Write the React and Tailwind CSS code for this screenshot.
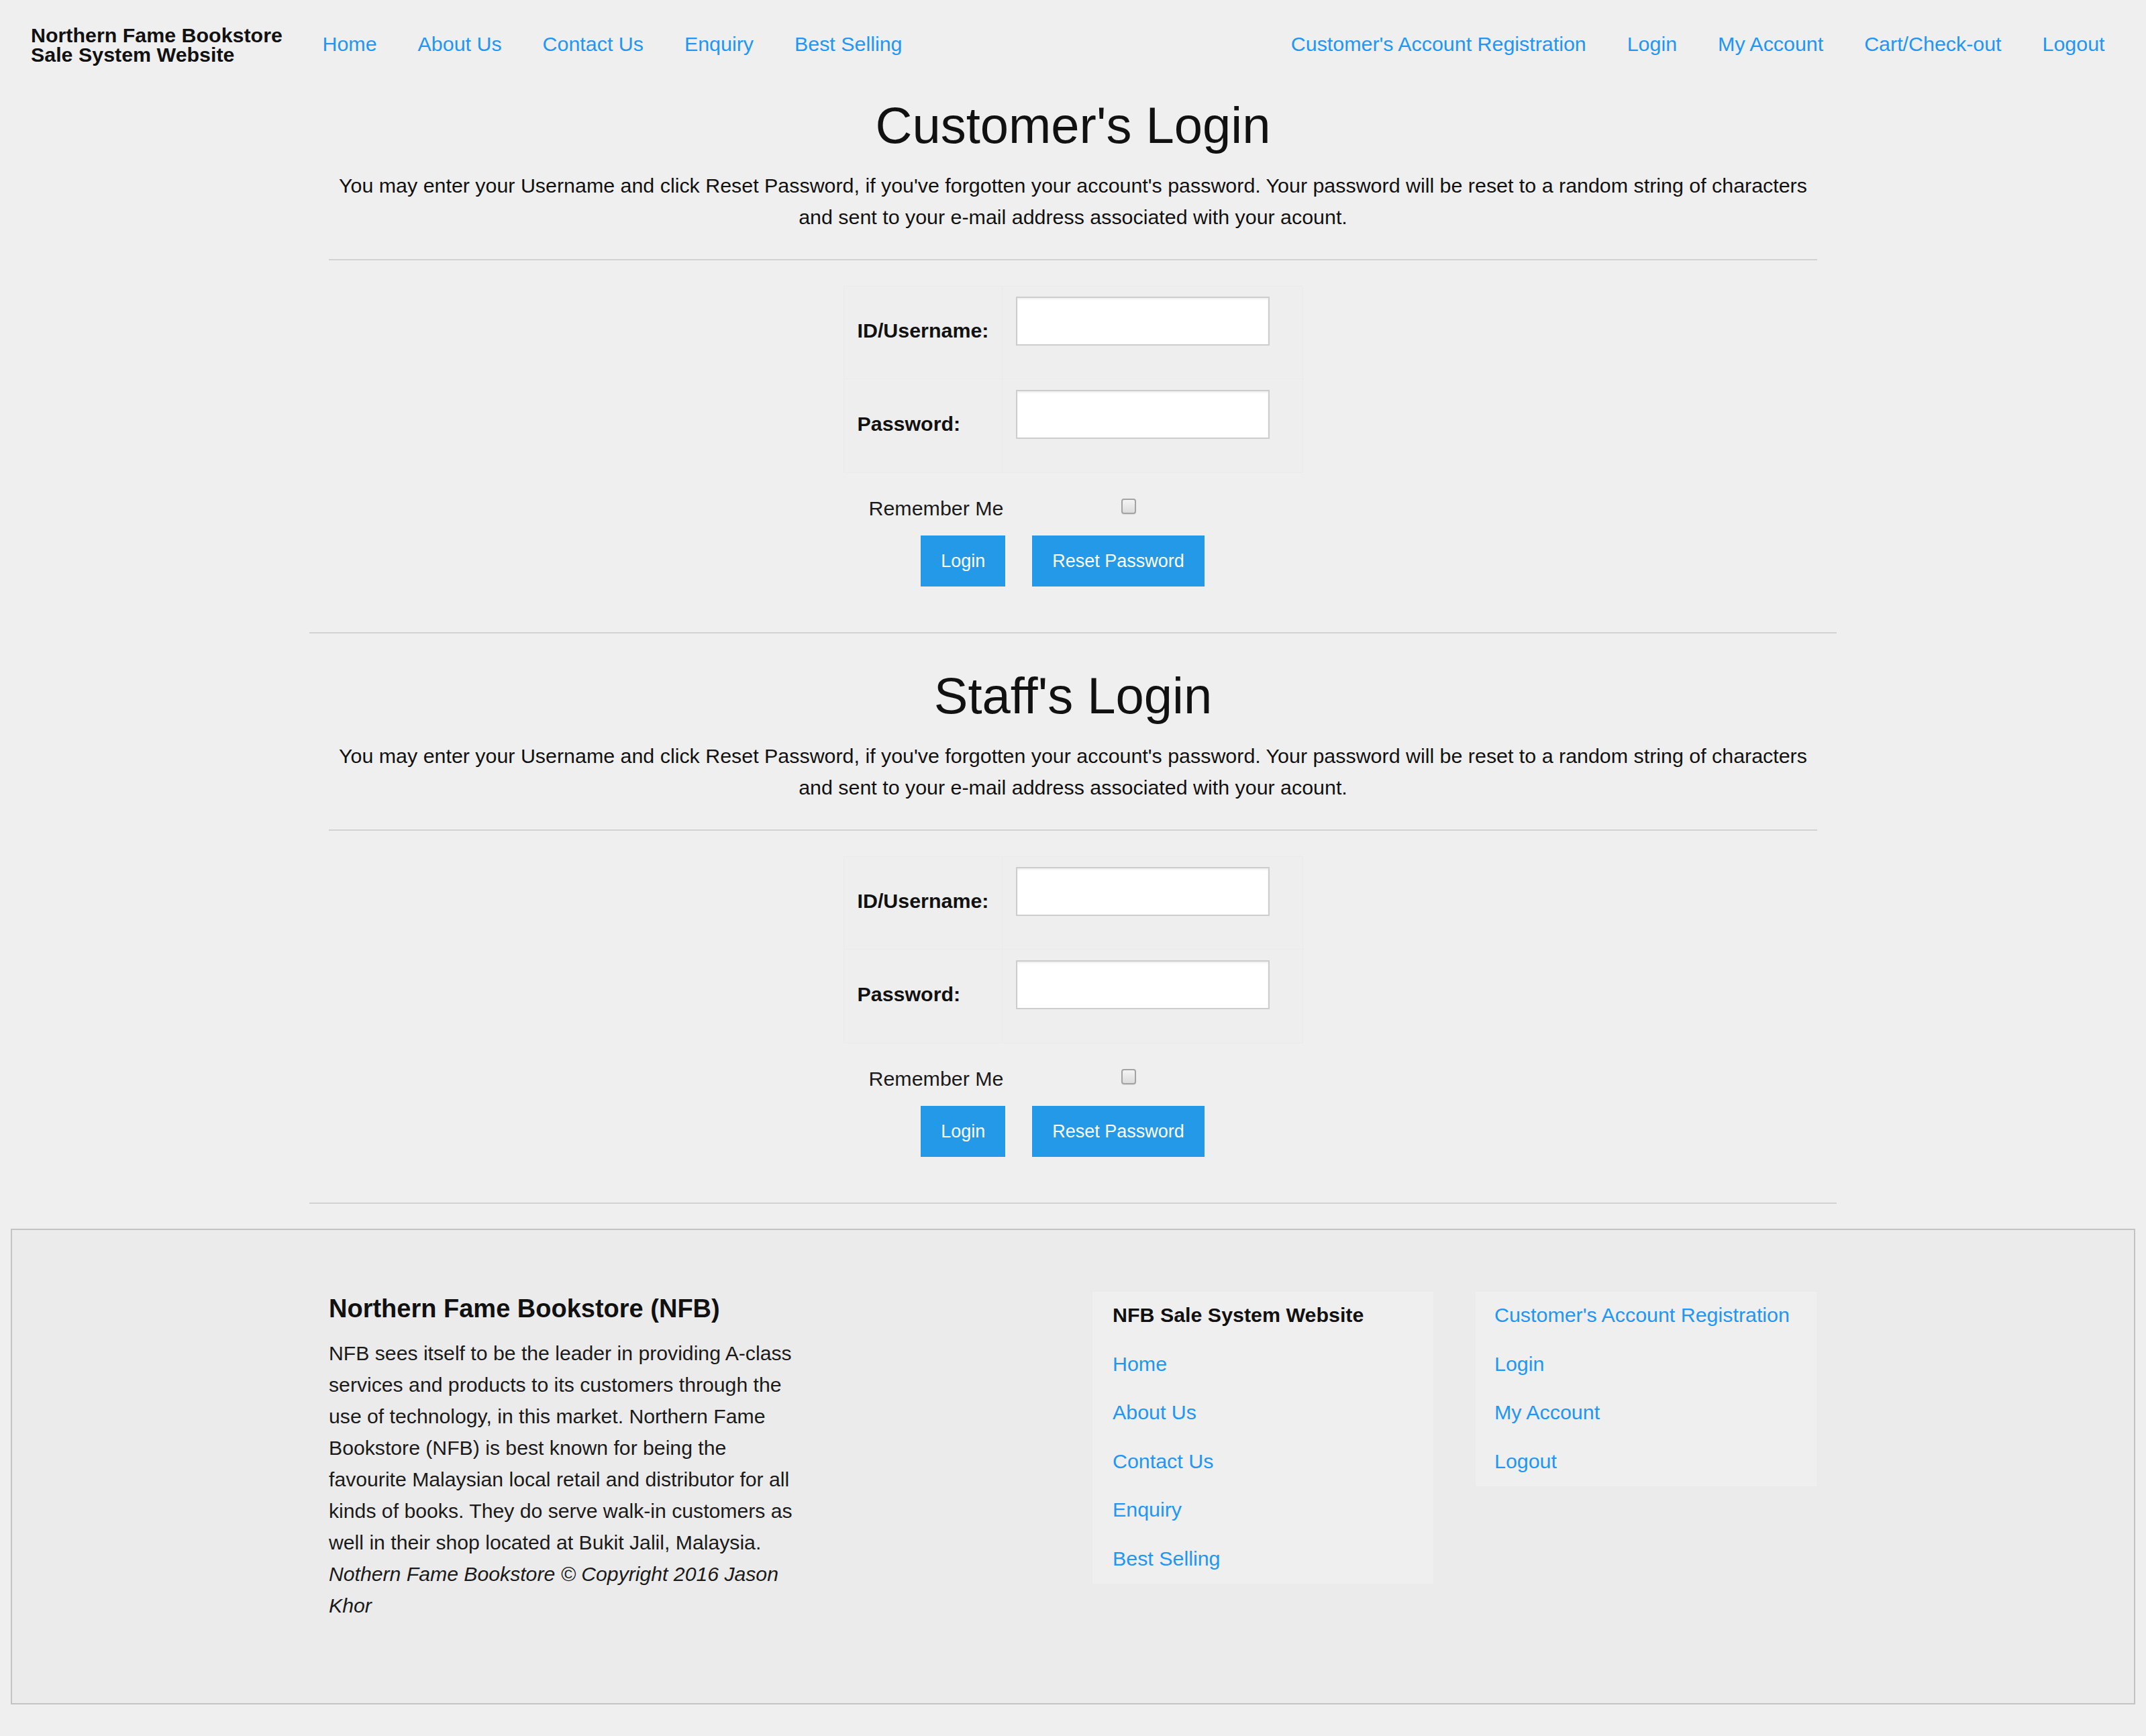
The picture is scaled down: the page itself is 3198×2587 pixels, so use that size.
import React from "react";

const FONT = { fontFamily: '"Liberation Sans", Arial, Helvetica, sans-serif' };

function NavLink({ children }) {
  return (
    <a href="#" className="px-[30.5px] text-[30.4px] leading-[45px] text-[#2196f3] whitespace-nowrap">
      {children}
    </a>
  );
}

function LoginSection({ title, first }) {
  return (
    <section>
      <div className="px-[29px]">
        <h1
          className={
            (first ? "mt-[14px]" : "mt-[50px]") +
            " text-center text-[76px] leading-[85px] font-normal text-[#111]"
          }
        >
          {title}
        </h1>
        <p className="mt-[24px] text-center text-[30.4px] leading-[47px] text-[#111] whitespace-nowrap">
          You may enter your Username and click Reset Password, if you've forgotten your account's password. Your password will be reset to a random string of characters
          <br />
          and sent to your e-mail address associated with your acount.
        </p>
        <div className="mt-[39px] h-[2px] bg-[#d2d2d2]" />
      </div>

      <div className="mt-[38px] mx-auto w-[685px] grid grid-cols-[236px_449px] border border-[#ebebeb] bg-[#eeeeee]">
        <div className="flex items-center pl-[20px] pb-[5px] border-r border-b border-[#ebebeb] text-[30.4px] font-bold text-[#111]">
          ID/Username:
        </div>
        <div className="pl-[20px] pt-[15px] pb-[49px] border-b border-[#ebebeb]">
          <input
            type="text"
            className="block w-[378px] h-[73px] bg-white border-2 border-[#cdcdcd] shadow-[inset_0_2px_3px_rgba(0,0,0,0.07)] outline-none"
          />
        </div>
        <div className="flex items-center pl-[20px] pb-[5px] border-r border-[#ebebeb] text-[30.4px] font-bold text-[#111]">
          Password:
        </div>
        <div className="pl-[20px] pt-[16px] pb-[50px]">
          <input
            type="password"
            className="block w-[378px] h-[73px] bg-white border-2 border-[#cdcdcd] shadow-[inset_0_2px_3px_rgba(0,0,0,0.07)] outline-none"
          />
        </div>
      </div>

      <div className="mt-[28px] mx-auto w-[685px] h-[48px] flex items-center pl-[38px]">
        <span className="text-[30.4px] leading-[48px] text-[#1a1a1a] w-[376px]">Remember Me</span>
        <input
          type="checkbox"
          className="appearance-none w-[22px] h-[23px] -mt-[6px] rounded-[4px] border-2 border-[#a3a3a3] bg-gradient-to-b from-[#f4f4f4] to-[#dcdcdc] shadow-[0_1px_1px_rgba(0,0,0,0.08)]"
        />
      </div>

      <div className="mt-[17px] flex justify-center gap-[40px] pr-[31px]">
        <button className="h-[76px] px-[30px] bg-[#2399e7] text-white text-[27px]">Login</button>
        <button className="h-[76px] px-[30px] bg-[#2399e7] text-white text-[27px]">Reset Password</button>
      </div>

      <div className="mt-[68px] h-[2px] bg-[#d2d2d2]" />
    </section>
  );
}

function FooterItem({ children, title, pad }) {
  return (
    <div
      className={
        (pad || "px-[30px]") +
        " pt-[11px] pb-[15.5px] text-[30.4px] leading-[46px] whitespace-nowrap " +
        (title ? "font-bold text-[#111]" : "text-[#2196f3]")
      }
    >
      {children}
    </div>
  );
}

export default function App() {
  return (
    <div className="min-h-screen bg-[#efefef] w-[3198px]" style={FONT}>
      <nav className="h-[130px] flex items-center pr-[31px]">
        <div className="w-[450px] pl-[46px] mt-[3px] text-[30.4px] leading-[29px] font-bold text-[#111] whitespace-nowrap">
          Northern Fame Bookstore
          <br />
          Sale System Website
        </div>
        <div className="flex items-center">
          <NavLink>Home</NavLink>
          <NavLink>About Us</NavLink>
          <NavLink>Contact Us</NavLink>
          <NavLink>Enquiry</NavLink>
          <NavLink>Best Selling</NavLink>
        </div>
        <div className="ml-auto flex items-center">
          <NavLink>Customer's Account Registration</NavLink>
          <NavLink>Login</NavLink>
          <NavLink>My Account</NavLink>
          <NavLink>Cart/Check-out</NavLink>
          <NavLink>Logout</NavLink>
        </div>
      </nav>

      <main className="w-[2276px] mx-auto">
        <LoginSection title="Customer's Login" first />
        <LoginSection title="Staff's Login" />
      </main>

      <footer className="mt-[37px] mx-[16px] mb-[47px] h-[709px] border-2 border-[#c3c3c3] bg-[#ebebeb] pt-[92px] pl-[472px]">
        <div className="flex items-start">
          <div className="w-[706px]">
            <h3 className="text-[38px] leading-[50px] font-bold text-[#111] whitespace-nowrap">Northern Fame Bookstore (NFB)</h3>
            <p className="mt-[18px] text-[30.2px] leading-[47px] text-[#1a1a1a]">
              NFB sees itself to be the leader in providing A-class services and products to its customers through the use of technology, in this market. Northern Fame Bookstore (NFB) is best known for being the favourite Malaysian local retail and distributor for all kinds of books. They do serve walk-in customers as well in their shop located at Bukit Jalil, Malaysia.{" "}
              <i>Nothern Fame Bookstore © Copyright 2016 Jason Khor</i>
            </p>
          </div>
          <div className="ml-[432px] w-[508px] bg-[#efefef]">
            <FooterItem title>NFB Sale System Website</FooterItem>
            <FooterItem>Home</FooterItem>
            <FooterItem>About Us</FooterItem>
            <FooterItem>Contact Us</FooterItem>
            <FooterItem>Enquiry</FooterItem>
            <FooterItem>Best Selling</FooterItem>
          </div>
          <div className="ml-[63px] w-[508px] bg-[#efefef]">
            <FooterItem pad="px-[28px]">Customer's Account Registration</FooterItem>
            <FooterItem pad="px-[28px]">Login</FooterItem>
            <FooterItem pad="px-[28px]">My Account</FooterItem>
            <FooterItem pad="px-[28px]">Logout</FooterItem>
          </div>
        </div>
      </footer>
    </div>
  );
}
